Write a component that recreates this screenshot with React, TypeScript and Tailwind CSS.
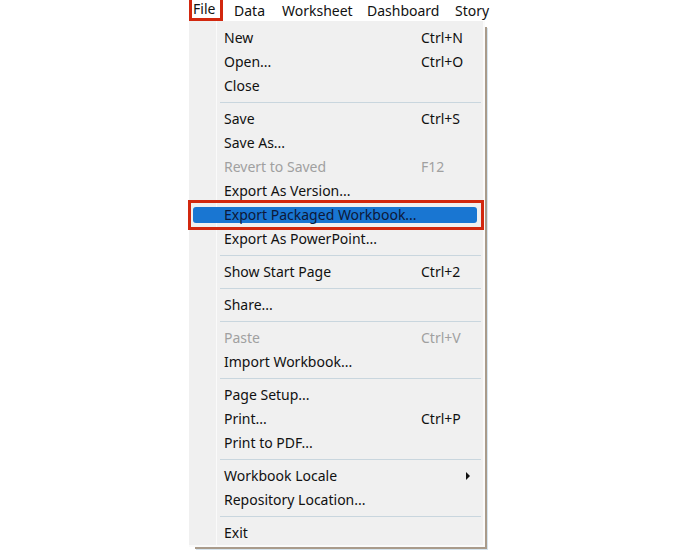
import React from "react";

type Item =
  | { sep: true }
  | { label: string; shortcut?: string; disabled?: boolean; highlight?: boolean; submenu?: boolean };

const items: Item[] = [
  { label: "New", shortcut: "Ctrl+N" },
  { label: "Open...", shortcut: "Ctrl+O" },
  { label: "Close" },
  { sep: true },
  { label: "Save", shortcut: "Ctrl+S" },
  { label: "Save As..." },
  { label: "Revert to Saved", shortcut: "F12", disabled: true },
  { label: "Export As Version..." },
  { label: "Export Packaged Workbook...", highlight: true },
  { label: "Export As PowerPoint..." },
  { sep: true },
  { label: "Show Start Page", shortcut: "Ctrl+2" },
  { sep: true },
  { label: "Share..." },
  { sep: true },
  { label: "Paste", shortcut: "Ctrl+V", disabled: true },
  { label: "Import Workbook..." },
  { sep: true },
  { label: "Page Setup..." },
  { label: "Print...", shortcut: "Ctrl+P" },
  { label: "Print to PDF..." },
  { sep: true },
  { label: "Workbook Locale", submenu: true },
  { label: "Repository Location..." },
  { sep: true },
  { label: "Exit" },
];

export default function App() {
  return (
    <div
      className="w-[683px] h-[550px] bg-white overflow-hidden text-[14px] text-[#111]"
      style={{ fontFamily: '"Noto Sans", "Open Sans", sans-serif' }}
    >
      {/* menubar */}
      <div className="flex h-[21px] items-stretch pl-[189px]">
        <div className="w-[34px] border-[3px] border-t-0 border-[#d2280f] flex items-center pl-[1px] leading-none">
          File
        </div>
        <div className="ml-[11px] w-[48px] flex items-center leading-none">Data</div>
        <div className="w-[85px] flex items-center leading-none">Worksheet</div>
        <div className="w-[88px] flex items-center leading-none">Dashboard</div>
        <div className="flex items-center leading-none">Story</div>
      </div>

      {/* dropdown */}
      <div className="ml-[189px] w-[296px] bg-[linear-gradient(to_right,#f0f0f0_27px,#fafafa_27px,#fafafa_28px,#f0f0f0_28px)] border-r-2 border-b-2 border-[#fafafa] pt-[5px] shadow-[4px_4px_0_-2px_#a99b8b,5px_5px_0_-2px_#d5e4ee]">
        {items.map((it, i) => {
          if ("sep" in it) {
            return (
              <div key={i} className="h-[9px] pt-[4px] pl-[31px] pr-[2px]">
                <div className="h-px bg-[#c9d6de]" />
              </div>
            );
          }
          return (
            <div key={i} className="relative h-[24px] flex items-center">
              {it.highlight && (
                <>
                  <div className="absolute left-[4px] right-[6px] top-[4px] bottom-[4px] rounded-[3px] bg-[#1976d2]" />
                  <div className="absolute left-[-1px] right-[-1px] top-[-3px] bottom-[-3px] border-[3px] border-[#d2280f]" />
                </>
              )}
              <div
                className={`relative w-[232px] pl-[35px] whitespace-nowrap leading-none ${
                  it.disabled ? "text-[#a0a0a0]" : it.highlight ? "text-[#0d1838]" : "text-[#111]"
                }`}
              >
                {it.label}
              </div>
              {it.shortcut && (
                <div className={`relative whitespace-nowrap leading-none ${it.disabled ? "text-[#a0a0a0]" : "text-[#111]"}`}>
                  {it.shortcut}
                </div>
              )}
              {it.submenu && (
                <div className="relative ml-[45px] w-0 h-0 border-y-[4px] border-y-transparent border-l-[4px] border-l-[#111]" />
              )}
            </div>
          );
        })}
      </div>
    </div>
  );
}
